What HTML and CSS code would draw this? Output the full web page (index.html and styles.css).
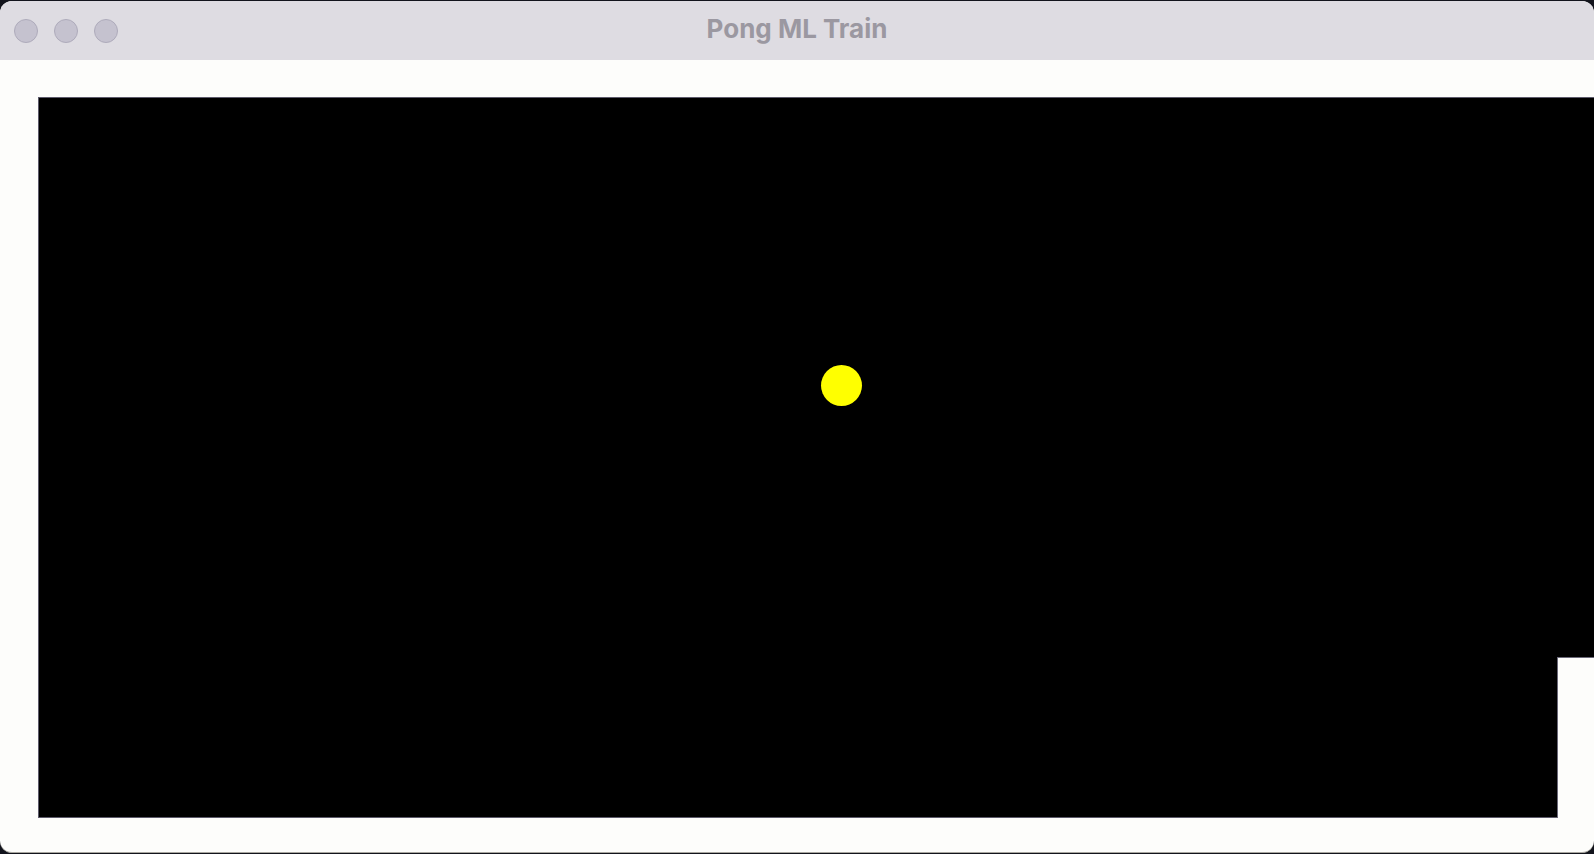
FILE: index.html
```html
<!DOCTYPE html>
<html>
<head>
<meta charset="utf-8">
<title>Pong ML Train</title>
<link rel="stylesheet" href="styles.css">
</head>
<body>
<div class="window">
  <div class="titlebar">
    <div class="lights">
      <span class="light"></span>
      <span class="light"></span>
      <span class="light"></span>
    </div>
    <div class="title">Pong ML Train</div>
  </div>
  <div class="content">
    <div class="court">
      <div class="ball"></div>
      <div class="paddle"></div>
    </div>
  </div>
</div>
</body>
</html>
```

FILE: styles.css
```css
html, body {
  margin: 0;
  padding: 0;
  width: 1594px;
  height: 854px;
  overflow: hidden;
  background: #12141c;
}

.window {
  margin-top: 1px;
  width: 1594px;
  height: 852px;
  border-radius: 12px;
  overflow: hidden;
  background: #fdfdfb;
  border-bottom: 1px solid #a9a7a0;
  display: flex;
  flex-direction: column;
  box-sizing: border-box;
}

.titlebar {
  height: 59px;
  flex: none;
  background: #dedce2;
  display: flex;
  align-items: center;
  position: relative;
}

.lights {
  display: flex;
  gap: 16px;
  padding-left: 14px;
}

.light {
  width: 22px;
  height: 22px;
  border-radius: 50%;
  background: #c5c2cf;
  border: 1px solid #aeabbb;
  display: block;
}

.title {
  position: absolute;
  left: 0;
  right: 0;
  top: 12px;
  text-align: center;
  font-family: Inter, "Liberation Sans", sans-serif;
  font-weight: 700;
  font-size: 26px;
  color: #9b98a1;
}

.content {
  flex: 1;
  padding: 37px 0 0 38px;
  overflow: hidden;
}

.court {
  position: relative;
  width: 1600px;
  height: 719px;
  background: #000;
  border-left: 1px solid #5c5a6a;
  border-top: 1px solid #5c5a6a;
  border-bottom: 1px solid #5c5a6a;
}

.ball {
  position: absolute;
  left: 782px;
  top: 267px;
  width: 41px;
  height: 41px;
  border-radius: 50%;
  background: #ffff00;
}

.paddle {
  position: absolute;
  left: 1518px;
  top: 559px;
  width: 80px;
  height: 160px;
  background: #fdfdfb;
  border-left: 1px solid #6a6878;
  border-top: 1px solid #6a6878;
}
```
